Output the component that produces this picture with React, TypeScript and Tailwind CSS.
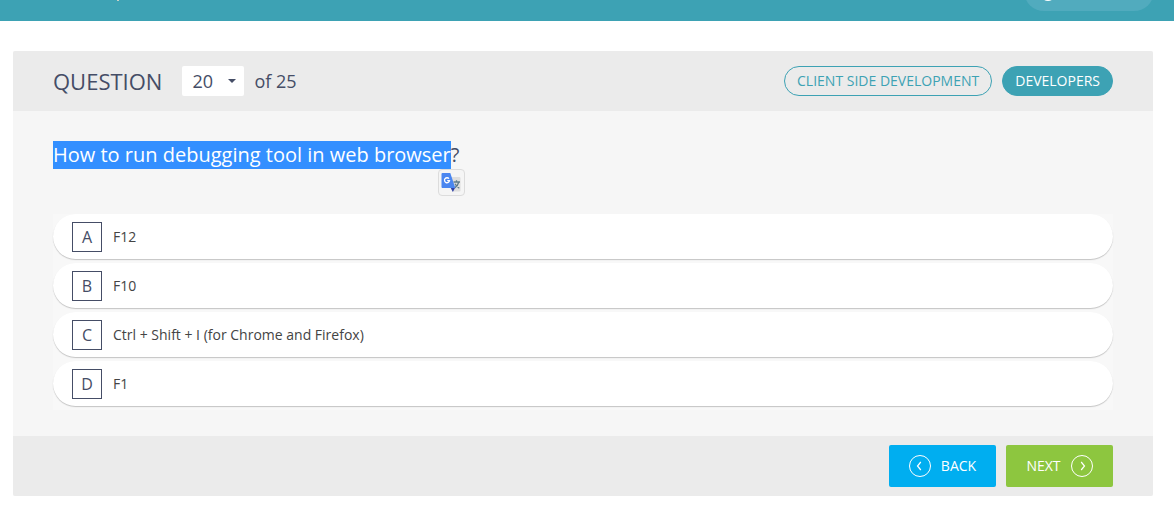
import { useState } from "react";

const options = [
  { letter: "A", text: "F12" },
  { letter: "B", text: "F10" },
  { letter: "C", text: "Ctrl + Shift + I (for Chrome and Firefox)" },
  { letter: "D", text: "F1" },
];

const numbers = Array.from({ length: 25 }, (_, i) => i + 1);

function TopBar() {
  return (
    <header className="flex h-[21px] items-end justify-between overflow-hidden bg-[#3da2b4] pr-5">
      <span className="mb-5 ml-[117px] h-px w-0.5 bg-[#c8d2c8]" />
      <button
        type="button"
        aria-label="Account"
        className="mb-2.5 flex h-10 w-[130px] shrink-0 items-center rounded-full bg-[#51abbe] pl-4"
      >
        <svg width="16" height="24" viewBox="0 0 16 24" fill="none" stroke="#fff" strokeWidth="2">
          <circle cx="8" cy="14.500" r="6.500" />
        </svg>
      </button>
    </header>
  );
}

function TranslateIcon() {
  return (
    <svg width="21" height="21" viewBox="0 0 21 21">
      <path d="M7 5h11.500a1 1 0 0 1 1 1v12.500a1 1 0 0 1-1 1H12z" fill="#dedede" />
      <path
        d="M12.500 10h6.500M15.500 8.300V10M17.800 10c-.6 2.600-2.200 4.600-4.200 6M14 11.800c.9 1.800 2.500 3.300 4.300 4.500"
        stroke="#607d8b"
        strokeWidth="1.300"
        fill="none"
      />
      <path d="M9.500 15.500h4.800L11.800 20z" fill="#3142a5" />
      <path d="M1.500 1h7.800l5 15H1.500a1 1 0 0 1-1-1V2a1 1 0 0 1 1-1z" fill="#4a86f0" />
      <path
        d="M8 6.700A2.500 2.500 0 1 0 8.500 8.700H6.200"
        stroke="#fff"
        strokeWidth="1.300"
        fill="none"
      />
    </svg>
  );
}

function CircleChevron({ direction }: { direction: "left" | "right" }) {
  return (
    <svg width="22" height="22" viewBox="0 0 22 22" fill="none" stroke="#fff">
      <circle cx="11" cy="11" r="10.500" />
      <path
        d={direction === "left" ? "M11.800 7L8.500 11L11.800 15" : "M10.200 7L13.500 11L10.200 15"}
        strokeWidth="1.200"
      />
    </svg>
  );
}

export default function App() {
  const [current, setCurrent] = useState(20);
  const [answer, setAnswer] = useState("");

  return (
    <div className="font-['Open_Sans','Noto_Sans',sans-serif] text-[#454d66]">
      <TopBar />
      <main className="mt-[30px] mr-[21px] mb-2.5 ml-[13px] overflow-hidden rounded-xs bg-[#f6f6f6]">
        <div className="flex h-[60px] items-center justify-between bg-[#ebebeb] px-10">
          <div className="flex items-center text-lg">
            <label htmlFor="question" className="mr-5 text-[22px]">
              QUESTION
            </label>
            <div className="relative mr-2.5">
              <select
                id="question"
                value={current}
                onChange={(e) => setCurrent(Number(e.target.value))}
                className="block h-[30px] w-[62px] appearance-none rounded-xs bg-white pl-2.5"
              >
                {numbers.map((n) => (
                  <option key={n} value={n}>
                    {n}
                  </option>
                ))}
              </select>
              <svg
                className="pointer-events-none absolute top-[13px] right-2"
                width="8"
                height="4"
                viewBox="0 0 8 4"
              >
                <path d="M0 0h8L4 4z" fill="#454d66" />
              </svg>
            </div>
            <span>of 25</span>
          </div>
          <div className="flex gap-2.5 text-sm">
            <a
              href="#client-side"
              className="flex h-[30px] items-center rounded-full border border-[#3da2b4] px-3 text-[#3da2b4]"
            >
              CLIENT SIDE DEVELOPMENT
            </a>
            <a
              href="#developers"
              className="flex h-[30px] items-center rounded-full border border-[#3da2b4] bg-[#3da2b4] px-3 text-white"
            >
              DEVELOPERS
            </a>
          </div>
        </div>

        <div className="px-10 pt-[30px] pb-[26px]">
          <h1 className="text-xl leading-7">
            <span className="relative inline-block">
              <mark className="block bg-[#338fff] text-white">
                How to run debugging tool in web browser
              </mark>
              <button
                type="button"
                aria-label="Translate"
                className="absolute top-7 -right-3.5 flex size-[27px] items-center justify-center rounded-sm border border-[#dcdcdc] bg-[#f5f5f5]"
              >
                <TranslateIcon />
              </button>
            </span>
            ?
          </h1>

          <div role="radiogroup" aria-label="Answers" className="mt-[45px]">
            {options.map((o) => (
              <div key={o.letter} className="bg-[#f8f8f8] pb-1">
                <label className="flex h-[45px] cursor-pointer items-center gap-[11px] rounded-full bg-white pl-[19px] text-sm shadow-[0_1px_1px_#c4c4c4]">
                  <input
                    type="radio"
                    name="answer"
                    value={o.letter}
                    checked={answer === o.letter}
                    onChange={() => setAnswer(o.letter)}
                    className="sr-only"
                  />
                  <span className="flex size-[30px] items-center justify-center border border-[#454d66] text-base">
                    {o.letter}
                  </span>
                  <span className="text-[#444]">{o.text}</span>
                </label>
              </div>
            ))}
          </div>
        </div>

        <div className="flex h-[60px] items-center justify-end gap-2.5 bg-[#ebebeb] px-10 text-sm text-white">
          <button
            type="button"
            className="flex h-[42px] w-[107px] items-center justify-center gap-2.5 rounded-xs bg-[#00aef0]"
          >
            <CircleChevron direction="left" />
            BACK
          </button>
          <button
            type="button"
            className="flex h-[42px] w-[107px] items-center justify-center gap-2.5 rounded-xs bg-[#8dc63f]"
          >
            NEXT
            <CircleChevron direction="right" />
          </button>
        </div>
      </main>
    </div>
  );
}
